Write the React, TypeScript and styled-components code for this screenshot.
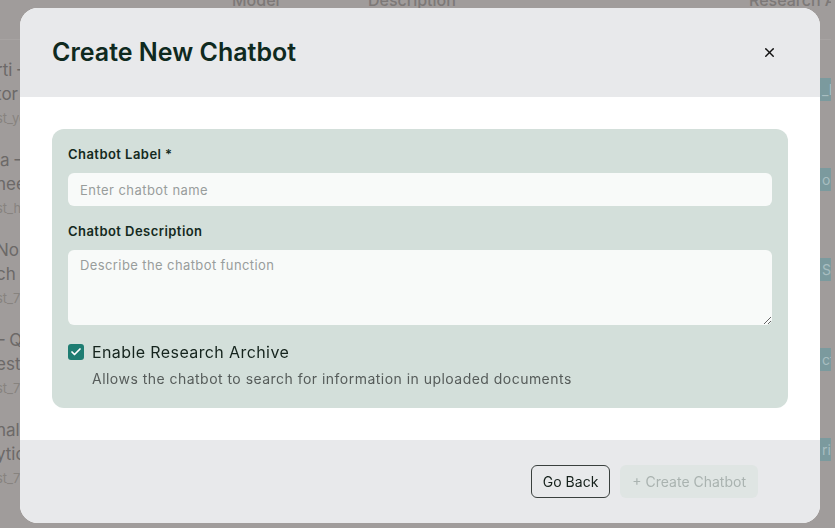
import React from "react";
import styled, { createGlobalStyle } from "styled-components";
import { X, Check } from "lucide-react";

const GlobalStyle = createGlobalStyle`
    html, body {
        margin: 0;
        padding: 0;
        background: #a09c9b;
        overflow: hidden;
    }
    * {
        box-sizing: border-box;
    }
    body {
        font-family: Inter, "Noto Sans", "DejaVu Sans", sans-serif;
    }
`;

// the page that sits behind the dimmed backdrop
const Page = styled.div`
    width: 835px;
    height: 528px;
    overflow: hidden;
    margin-top: -12px;
    margin-left: -4px;
    color: #6c6968;
`;

const TableHead = styled.div`
    display: grid;
    grid-template-columns: 236px 136px 381px 1fr;
    height: 52px;
    border-bottom: 1px solid #a7a3a2;
    font-size: 16px;
    font-weight: 500;
    color: #7c7877;
    white-space: nowrap;
    padding-top: 2px;
`;

const TableRow = styled.div`
    display: grid;
    grid-template-columns: 236px 136px 381px 1fr;
    height: 90px;
    padding-top: 18px;
    white-space: nowrap;
`;

const NameCell = styled.div`
    display: flex;
    flex-direction: column;
    font-size: 17px;
    line-height: 24px;
`;

const IdLine = styled.span`
    font-size: 13px;
    color: #87837f;
`;

const BadgeCell = styled.div`
    padding-left: 71px;
    padding-top: 20px;
`;

const Badge = styled.span`
    display: inline-block;
    height: 23px;
    padding: 0 6px 0 2px;
    background: #7b9a9e;
    color: #a8bec1;
    font-size: 14px;
    line-height: 23px;
`;

const Backdrop = styled.div`
    position: fixed;
    inset: 0;
    display: flex;
    align-items: flex-start;
    padding: 8px 0 0 20px;
`;

const Modal = styled.div`
    width: 800px;
    height: 515px;
    border-radius: 18px;
    overflow: hidden;
    display: flex;
    flex-direction: column;
    background: #ffffff;
`;

const Header = styled.div`
    height: 89px;
    background: #e8e9eb;
    display: flex;
    align-items: center;
    justify-content: space-between;
    padding: 0 43px 0 32px;
`;

const Title = styled.h2`
    margin: 0;
    font-size: 25px;
    font-weight: 600;
    color: #0f2a1f;
    letter-spacing: 0;
    padding-bottom: 2px;
`;

const CloseButton = styled.button`
    border: none;
    background: transparent;
    padding: 0;
    width: 16px;
    height: 16px;
    display: flex;
    align-items: center;
    justify-content: center;
    color: #111;
    cursor: pointer;
`;

const Body = styled.div`
    flex: 1;
    padding: 32px;
`;

const Card = styled.div`
    background: #d3dfda;
    border-radius: 12px;
    padding: 16px 16px 19px;
    display: flex;
    flex-direction: column;
`;

const Label = styled.label<{ $spaced?: boolean }>`
    font-size: 13px;
    line-height: 18px;
    font-weight: 600;
    letter-spacing: 0.45px;
    color: #142a20;
    margin-top: ${(p) => (p.$spaced ? "16px" : "0")};
    margin-bottom: 10px;
`;

const TextInput = styled.input`
    height: 33px;
    border: none;
    outline: none;
    border-radius: 6px;
    background: #f8faf9;
    padding: 0 12px;
    font-family: inherit;
    font-size: 13px;
    letter-spacing: 0.45px;
    color: #222;

    &::placeholder {
        color: #989d9c;
    }
`;

const TextArea = styled.textarea`
    height: 75px;
    border: none;
    outline: none;
    border-radius: 6px;
    background: #f8faf9;
    padding: 7px 12px;
    font-family: inherit;
    font-size: 13px;
    letter-spacing: 0.4px;
    color: #222;
    resize: vertical;

    &::placeholder {
        color: #989d9c;
    }
`;

const CheckRow = styled.div`
    display: flex;
    align-items: center;
    gap: 8px;
    margin-top: 16px;
    height: 22px;
`;

const CheckBox = styled.span`
    width: 16px;
    height: 16px;
    border-radius: 3px;
    background: #1e7d72;
    color: #fff;
    display: flex;
    align-items: center;
    justify-content: center;
`;

const CheckLabel = styled.span`
    font-size: 16px;
    letter-spacing: 0.4px;
    color: #15241d;
`;

const Helper = styled.p`
    margin: 6px 0 0 24px;
    font-size: 14px;
    line-height: 20px;
    letter-spacing: 0.47px;
    color: #565c5a;
`;

const Footer = styled.div`
    height: 83px;
    background: #e8e9eb;
    display: flex;
    align-items: center;
    justify-content: flex-end;
    gap: 10px;
    padding: 0 62px 0 32px;
`;

const Button = styled.button<{ $variant: "outline" | "disabled" }>`
    height: 33px;
    border-radius: 6px;
    font-family: inherit;
    font-size: 14px;
    padding: 0 11px;
    border: 1px solid ${(p) => (p.$variant === "outline" ? "#3a403e" : "transparent")};
    background: ${(p) => (p.$variant === "outline" ? "transparent" : "#dfe5e3")};
    color: ${(p) => (p.$variant === "outline" ? "#15201b" : "#aab3b0")};
    cursor: ${(p) => (p.$variant === "outline" ? "pointer" : "default")};
`;

const rows = [
    { a: "rti – Smart", b: "tor Assistant", id: "st_yq82", badge: "_EDU" },
    { a: "la – Review", b: "heet Helper", id: "st_h91k", badge: "omni" },
    { a: "No Limits", b: "ch Agent", id: "st_7a3c", badge: "STEM" },
    { a: " – Quiz", b: "est Builder", id: "st_7f20", badge: "ctise" },
    { a: "nalyst", b: "ytics Bot", id: "st_7d11", badge: "rint" },
];

export default function App() {
    return (
        <>
            <GlobalStyle />
            <Page>
                <TableHead>
                    <span />
                    <span>Model</span>
                    <span>Description</span>
                    <span>Research A</span>
                </TableHead>
                {rows.map((r) => (
                    <TableRow key={r.id}>
                        <NameCell>
                            <span>{r.a}</span>
                            <span>{r.b}</span>
                            <IdLine>{r.id}</IdLine>
                        </NameCell>
                        <span />
                        <span />
                        <BadgeCell>
                            <Badge>{r.badge}</Badge>
                        </BadgeCell>
                    </TableRow>
                ))}
            </Page>

            <Backdrop>
                <Modal>
                    <Header>
                        <Title>Create New Chatbot</Title>
                        <CloseButton aria-label="Close">
                            <X size={15} strokeWidth={2.2} />
                        </CloseButton>
                    </Header>

                    <Body>
                        <Card>
                            <Label>Chatbot Label *</Label>
                            <TextInput placeholder="Enter chatbot name" />
                            <Label $spaced>Chatbot Description</Label>
                            <TextArea placeholder="Describe the chatbot function" />
                            <CheckRow>
                                <CheckBox>
                                    <Check size={12} strokeWidth={3.5} />
                                </CheckBox>
                                <CheckLabel>Enable Research Archive</CheckLabel>
                            </CheckRow>
                            <Helper>Allows the chatbot to search for information in uploaded documents</Helper>
                        </Card>
                    </Body>

                    <Footer>
                        <Button $variant="outline">Go Back</Button>
                        <Button $variant="disabled" disabled>
                            + Create Chatbot
                        </Button>
                    </Footer>
                </Modal>
            </Backdrop>
        </>
    );
}
